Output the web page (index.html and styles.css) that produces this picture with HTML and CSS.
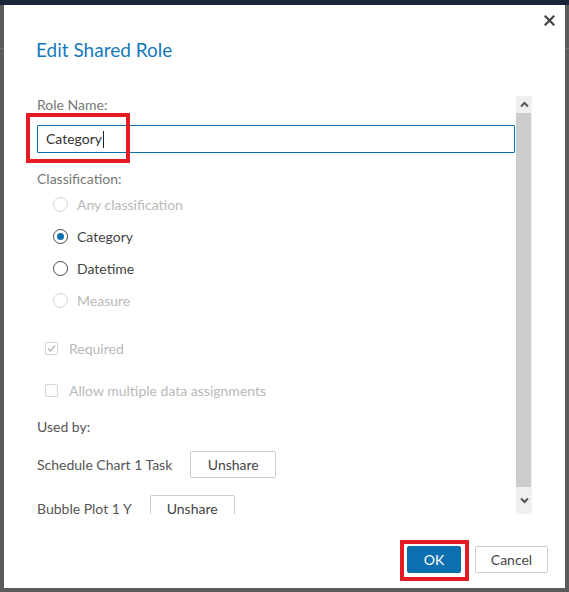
FILE: index.html
```html
<!DOCTYPE html>
<html>
<head>
<meta charset="utf-8">
<link rel="stylesheet" href="styles.css">
</head>
<body>
<div class="dialog">
  <div class="header">
    <h1 class="title">Edit Shared Role</h1>
    <button class="close" aria-label="Close">
      <svg width="11" height="11" viewBox="0 0 11 11"><path d="M1.5 1.5 L9.5 9.5 M9.5 1.5 L1.5 9.5" stroke="#444" stroke-width="2.2" stroke-linecap="square"/></svg>
    </button>
  </div>
  <div class="body">
    <div class="content">
      <div class="label">Role Name:</div>
      <div class="input">Category<span class="caret"></span></div>
      <div class="label section">Classification:</div>
      <div class="radios">
        <div class="radio disabled"><span class="circle"></span>Any classification</div>
        <div class="radio checked"><span class="circle"><span class="dot"></span></span>Category</div>
        <div class="radio"><span class="circle"></span>Datetime</div>
        <div class="radio disabled"><span class="circle"></span>Measure</div>
      </div>
      <div class="check disabled first"><span class="box"><svg width="9" height="9" viewBox="0 0 9 9"><path d="M1 4.5 L3.5 7 L8 1.5" fill="none" stroke="#b5b5b5" stroke-width="1.2"/></svg></span>Required</div>
      <div class="check disabled second"><span class="box"></span>Allow multiple data assignments</div>
      <div class="usedby">Used by:</div>
      <div class="userow r1"><span>Schedule Chart 1 Task</span><button class="btn">Unshare</button></div>
      <div class="userow r2"><span>Bubble Plot 1 Y</span><button class="btn">Unshare</button></div>
    </div>
    <div class="scrollbar">
      <div class="sb-btn up"><svg width="9" height="7" viewBox="0 0 9 7"><path d="M1 5.5 L4.5 2 L8 5.5" fill="none" stroke="#555" stroke-width="2"/></svg></div>
      <div class="thumb"></div>
      <div class="sb-btn down"><svg width="9" height="7" viewBox="0 0 9 7"><path d="M1 1.5 L4.5 5 L8 1.5" fill="none" stroke="#555" stroke-width="2"/></svg></div>
    </div>
  </div>
  <div class="footer">
    <button class="btn primary">OK</button>
    <button class="btn cancel">Cancel</button>
  </div>
  <div class="mark mark-input"></div>
  <div class="mark mark-ok"></div>
</div>
</body>
</html>
```
FILE: styles.css
```css
html, body { margin: 0; padding: 0; }
body {
  width: 569px;
  height: 592px;
  overflow: hidden;
  background: linear-gradient(#19263a 0 5px, #5b5b5b 5px 48px, #6e6e6e 48px 49px, #5b5b5b 49px);
  font-family: Lato, "Open Sans", sans-serif;
  box-sizing: border-box;
  padding: 5px 4px 4px 4px;
}
.dialog {
  position: relative;
  width: 561px;
  height: 583px;
  background: #fff;
  display: flex;
  flex-direction: column;
}
.header {
  position: relative;
  height: 91px;
}
.title {
  margin: 0;
  padding: 33px 0 0 32px;
  font-weight: 400;
  font-size: 19px;
  line-height: 24px;
  color: #1379ba;
}
.close {
  position: absolute;
  top: 10px;
  right: 10px;
  border: 0;
  background: none;
  padding: 0;
  width: 11px;
  height: 11px;
  display: flex;
}
.body {
  display: flex;
  height: 418px;
  padding: 0 33px 0 24px;
}
.content {
  flex: 1;
  overflow: hidden;
  padding-left: 9px;
  padding-right: 1px;
  font-size: 14px;
  color: #444;
}
.label {
  color: #777;
  line-height: 16px;
  margin-top: 1px;
}
.label.section { margin-top: 18px; }
.input {
  margin-top: 12px;
  height: 28px;
  box-sizing: border-box;
  border: 1px solid #0d6fae;
  border-radius: 1px;
  padding-left: 8px;
  line-height: 26px;
  color: #333;
  display: flex;
  align-items: center;
}
.caret {
  display: inline-block;
  width: 1px;
  height: 17px;
  background: #222;
  margin-left: 1px;
}
.radios { margin-top: 1px; }
.radio {
  height: 32px;
  display: flex;
  align-items: center;
  padding-left: 16px;
  color: #444;
}
.radio .circle {
  width: 13px;
  height: 13px;
  border: 1px solid #444;
  border-radius: 50%;
  margin-right: 9px;
  display: flex;
  align-items: center;
  justify-content: center;
}
.radio.disabled { color: #b9b9b9; }
.radio.disabled .circle { border-color: #d6d6d6; }
.radio .dot {
  width: 7px;
  height: 7px;
  border-radius: 50%;
  background: #0d6fae;
}
.check {
  height: 32px;
  display: flex;
  align-items: center;
  padding-left: 8px;
}
.check.first { margin-top: 16px; }
.check.second { margin-top: 10px; }
.check .box {
  width: 11px;
  height: 11px;
  border: 1px solid #d6d6d6;
  border-radius: 1px;
  margin-right: 11px;
  display: flex;
  align-items: center;
  justify-content: center;
}
.check.disabled { color: #b9b9b9; }
.usedby {
  margin-top: 13px;
  line-height: 16px;
  color: #555;
}
.userow {
  display: flex;
  align-items: center;
  gap: 18px;
  color: #555;
}
.userow.r1 { margin-top: 16px; }
.userow.r2 { margin-top: 17px; }
.btn {
  font-family: inherit;
  font-size: 14px;
  height: 27px;
  box-sizing: border-box;
  border: 1px solid #cdcdcd;
  border-radius: 2px;
  background: #fff;
  color: #444;
  padding: 0 16px;
}
.userow .btn { width: 86px; padding: 0; }
.userow.r2 .btn { width: 85px; }
.scrollbar {
  width: 16px;
  display: flex;
  flex-direction: column;
  background: #f0f0f0;
}
.sb-btn {
  display: flex;
  align-items: center;
  justify-content: center;
}
.sb-btn.up { height: 17px; }
.sb-btn.down { height: 27px; }
.thumb {
  flex: 1;
  background: #cdcdcd;
  margin-right: 1px;
}
.footer {
  margin-top: auto;
  display: flex;
  justify-content: flex-end;
  gap: 14px;
  padding: 0 17px 15px 0;
}
.btn.primary {
  width: 54px;
  padding: 0;
  background: #0b6fb0;
  border-color: #0b6fb0;
  color: #fff;
}
.btn.cancel { width: 73px; padding: 0; }
.mark {
  position: absolute;
  border: 4px solid #e41b23;
  box-sizing: border-box;
  pointer-events: none;
}
.mark-input { left: 22px; top: 108px; width: 104px; height: 50px; }
.mark-ok { left: 396px; top: 535px; width: 69px; height: 41px; }
```
